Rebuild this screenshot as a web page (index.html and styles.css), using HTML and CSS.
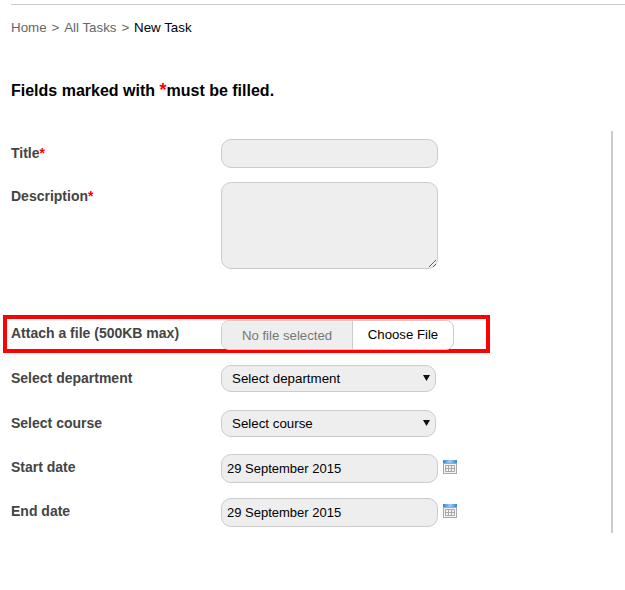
FILE: index.html
```html
<!doctype html>
<html lang="en">
<head>
<meta charset="UTF-8">
<title>New Task</title>
<link rel="stylesheet" href="styles.css">
</head>
<body>
<svg class="defs" width="0" height="0">
	<defs>
		<linearGradient id="cal-top" x1="0" y1="0" x2="1" y2="0">
			<stop offset="0" stop-color="#3a7fd5"/>
			<stop offset="0.5" stop-color="#9ccdf5"/>
			<stop offset="1" stop-color="#3a7fd5"/>
		</linearGradient>
		<g id="cal">
			<rect x="0" y="0" width="14" height="14" fill="#fff"/>
			<rect x="0.5" y="3.5" width="13" height="10" fill="#f4f4f4" stroke="#a8a8a8"/>
			<rect x="0" y="0" width="14" height="3" fill="url(#cal-top)"/>
			<path d="M2.5 5.5h9v6h-9zM2.5 8.5h9M5.5 5.5v6M8.5 5.5v6" fill="none" stroke="#a8a8a8"/>
		</g>
	</defs>
</svg>
<div class="crumbs">
	<a href="#">Home</a><span class="sep">&gt;</span><a href="#">All Tasks</a><span class="sep">&gt;</span><span class="here">New Task</span>
</div>
<h2 class="notice">Fields marked with <span class="req">*</span>must be filled.</h2>
<form class="panel">
	<div class="row row-title">
		<label class="lbl">Title<span class="req">*</span></label>
		<input class="field" type="text">
	</div>
	<div class="row row-desc">
		<label class="lbl">Description<span class="req">*</span></label>
		<textarea class="field area"></textarea>
	</div>
	<div class="row row-file">
		<label class="lbl">Attach a file (500KB max)</label>
		<div class="file">
			<span class="file-name">No file selected</span>
			<span class="file-btn">Choose File</span>
		</div>
	</div>
	<div class="row row-select">
		<label class="lbl">Select department</label>
		<select class="pick"><option>Select department</option></select>
	</div>
	<div class="row row-select row-course">
		<label class="lbl">Select course</label>
		<select class="pick"><option>Select course</option></select>
	</div>
	<div class="row row-date">
		<label class="lbl">Start date</label>
		<input class="field date" type="text" value="29 September 2015">
		<svg class="cal" width="14" height="14"><use href="#cal"/></svg>
	</div>
	<div class="row row-date">
		<label class="lbl">End date</label>
		<input class="field date" type="text" value="29 September 2015">
		<svg class="cal" width="14" height="14"><use href="#cal"/></svg>
	</div>
</form>
</body>
</html>
```

FILE: styles.css
```css
*{ box-sizing:border-box; }
html,body{ margin:0; padding:0; background:#fff; }
body{ font-family:"Liberation Sans",Arial,sans-serif; font-size:13px; color:#000; }
.defs{ display:block; height:0; }
.crumbs{
	margin:4px 0 0 11px;
	padding-top:15px;
	height:77px;
	border-top:1px solid #ccc;
	font-size:13.333px;
	line-height:16px;
	color:#666;
}
.crumbs a{ color:#666; text-decoration:none; }
.crumbs .sep{ margin:0 4.9px; }
.crumbs .here{ color:#000; }
.notice{
	margin:0 0 30px 11px;
	font-size:16px;
	line-height:20px;
	font-weight:bold;
}
.req{ color:#f00; }
.notice .req{ font-size:18px; line-height:16px; }
.panel{
	margin-left:3px;
	width:610px;
	height:402px;
	padding:8px 0 0 8px;
	border-right:2px solid #ccc;
}
.row{ display:flex; align-items:flex-start; }
.lbl{
	width:210px;
	flex:none;
	font-size:14px;
	line-height:16px;
	font-weight:bold;
	color:#444;
}
.field{
	display:block;
	width:217px;
	height:29px;
	margin:0;
	padding:0 5px;
	background:#eee;
	border:1px solid #ccc;
	border-radius:10px;
	font:13px "Liberation Sans",Arial,sans-serif;
	color:#000;
	outline:none;
}
.area{ height:87px; }
.row-title{ height:43px; }
.row-title .lbl{ margin-top:6px; }
.row-desc{ height:133px; }
.row-desc .lbl{ margin-top:6px; }
.row-file{
	margin-left:-8px;
	width:487px;
	height:38px;
	padding-left:4px;
	border:4px solid #f00;
	margin-bottom:12px;
}
.row-file .lbl{ margin-top:6px; }
.file{
	display:flex;
	width:233px;
	height:30px;
	margin-top:1px;
	border:1px solid #ccc;
	border-radius:8px;
	overflow:hidden;
	position:relative;
	z-index:1;
	background:#fff;
	font-size:13.2px;
	line-height:28px;
}
.file-name{ width:131px; background:#eee; border-right:1px solid #ccc; color:#777; text-align:center; padding-top:1px; }
.file-btn{ flex:1; text-align:center; color:#000; }
.row-select{ height:45px; }
.row-course{ height:44px; }
.row-select .lbl{ margin-top:5px; }
.pick{
	display:block;
	width:215px;
	height:27px;
	margin:0;
	padding:0 6px 0 10px;
	appearance:none;
	background:#eee url("data:image/svg+xml,%3Csvg xmlns='http://www.w3.org/2000/svg' width='7' height='6'%3E%3Cpath d='M0 0h7L3.5 6z' fill='%23111'/%3E%3C/svg%3E") no-repeat 201px 9px;
	border:1px solid #ccc;
	border-radius:10px;
	font:13.333px "Liberation Sans",Arial,sans-serif;
	color:#000;
}
.row-date{ height:44px; }
.row-date .lbl{ margin-top:5px; }
.cal{ margin:6px 0 0 5px; flex:none; }
```
